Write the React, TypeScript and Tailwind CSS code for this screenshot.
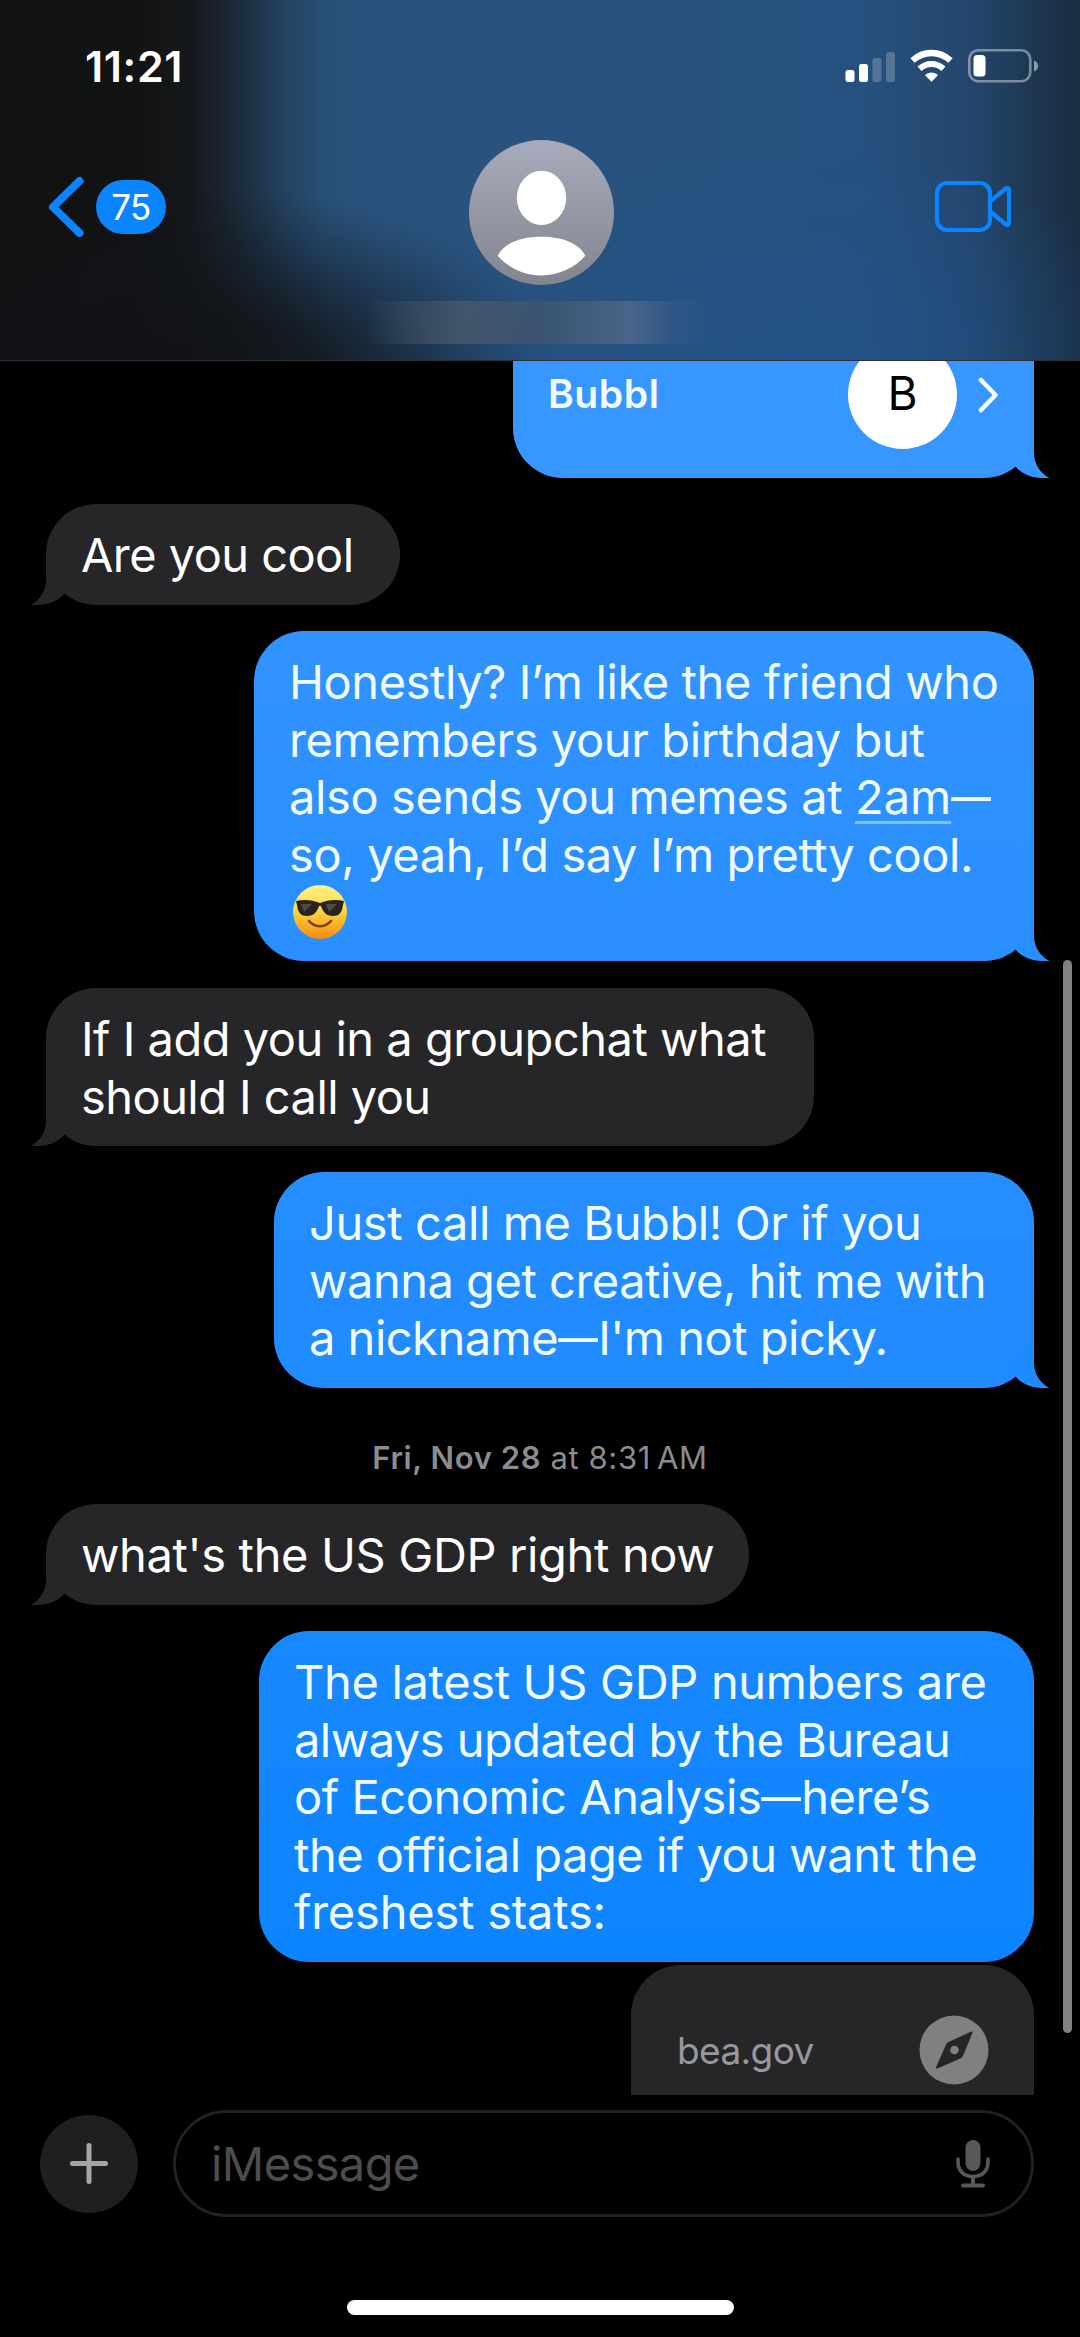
import type { ReactNode } from "react";
import clsx from "clsx";

interface Line {
  text: ReactNode;
  tracking?: string;
}

interface BubbleProps {
  lines: Line[];
  sent?: boolean;
  tail?: boolean;
  className?: string;
}

function Tail({ sent, className }: { sent?: boolean; className?: string }) {
  return (
    <svg
      className={clsx(
        "absolute bottom-0 h-[60px] w-[50px]",
        sent ? "-right-4" : "-left-4 -scale-x-100",
        className,
      )}
      viewBox="0 0 50 60"
      fill="currentColor"
    >
      <path d="M34 6V34C34 46 40 55 49.5 60C36 61 24 58 16 49L8 38Z" />
    </svg>
  );
}

function Bubble({ lines, sent, tail = true, className }: BubbleProps) {
  return (
    <div
      className={clsx(
        "relative rounded-[50px] pl-[35px] pt-[22px] text-[47px] leading-[57.6px]",
        sent ? "ml-auto mr-[46px] text-[#f0fbff]" : "ml-[46px] bg-[#262628] text-white",
        className,
      )}
    >
      {tail && <Tail sent={sent} className={sent ? "" : "text-[#262628]"} />}
      {lines.map((line, i) => (
        <div key={i} className={clsx("relative h-[57.6px] whitespace-nowrap", line.tracking ?? "tracking-[-0.4px]")}>
          {line.text}
        </div>
      ))}
    </div>
  );
}

// Inter's em dash is too long next to the rest of the text
function Dash() {
  return <span className="inline-block w-[40px] origin-left scale-x-[0.85]">—</span>;
}

function SunglassesFace() {
  return (
    <svg className="ml-[3px] mt-[1px] h-[56px] w-[56px]" viewBox="0 0 56 56">
      <defs>
        <linearGradient id="face" x1="0" y1="0" x2="0" y2="1">
          <stop offset="0" stopColor="#fff38a" />
          <stop offset="0.5" stopColor="#ffd43c" />
          <stop offset="1" stopColor="#f28a12" />
        </linearGradient>
      </defs>
      <circle cx="28" cy="28" r="27" fill="url(#face)" />
      <path
        d="M4 17C12 15 21 16 28 19C35 16 44 15 52 17L51 21C50 29 47 32 41 32C34 32 31 28 29 22H27C25 28 22 32 15 32C9 32 6 29 5 21Z"
        fill="#2a2421"
      />
      <path d="M9 20L20 20L12 28Z M34 20L45 20L37 28Z" fill="#77716c" opacity="0.5" />
      <path d="M17 37C23 44 33 44 39 37" stroke="#7a3d08" strokeWidth="2.6" strokeLinecap="round" fill="none" />
    </svg>
  );
}

function StatusBar() {
  return (
    <div className="flex h-[132px] items-center justify-between pl-[85px] pr-[41px] text-white">
      <div className="text-[43px] font-semibold leading-none tracking-[0.6px]">11:21</div>
      <div className="flex items-center gap-[15px]">
        <svg className="h-[34px] w-[50px]" viewBox="0 0 50 34" fill="currentColor">
          <rect x="0.5" y="21" width="9" height="12" rx="2.5" />
          <rect x="14" y="15" width="9" height="18" rx="2.5" />
          <rect x="27.5" y="9" width="9" height="24" rx="2.5" opacity="0.22" />
          <rect x="41" y="3" width="9" height="30" rx="2.5" opacity="0.22" />
        </svg>
        <svg className="h-[34px] w-[43px]" viewBox="0 0 43 34" fill="none" stroke="currentColor">
          <path d="M2.5 11.5C13.5 1.5 29.5 1.5 40.5 11.5" strokeWidth="6.4" />
          <path d="M9.5 19.8C16.5 13.3 26.5 13.3 33.5 19.8" strokeWidth="6" />
          <path d="M15 26.2C18.5 22.6 24.5 22.6 28 26.2L21.5 32.8Z" fill="currentColor" stroke="none" />
        </svg>
        <svg className="h-[34px] w-[71px]" viewBox="0 0 71 34">
          <rect x="1.3" y="1.3" width="61" height="31" rx="9" fill="none" stroke="white" strokeOpacity="0.42" strokeWidth="2.6" />
          <path d="M66 11.5C69 12.5 70 14.5 70 17C70 19.5 69 21.5 66 22.5Z" fill="white" fillOpacity="0.5" />
          <rect x="5.5" y="6" width="12" height="21.5" rx="3.5" fill="white" />
        </svg>
      </div>
    </div>
  );
}

function Header() {
  return (
    <header className="relative h-[361px] overflow-hidden border-b border-[#2c3036] bg-[linear-gradient(90deg,#111111_0px,#121313_140px,#15181b_190px,#1b2a38_235px,#234260_285px,#285077_325px,#2a527d_380px,#28527d_700px,#26507d_870px,#24466d_970px,#1e3852_1030px,#1a2c40_1080px)]">
      <div className="absolute inset-0 bg-[radial-gradient(ellipse_370px_200px_at_200px_385px,rgba(17,18,20,0.95),rgba(17,19,22,0.85)_35%,rgba(17,20,26,0.45)_65%,rgba(17,20,28,0.12)_88%,rgba(17,20,28,0))]" />
      <div className="absolute inset-0 bg-[radial-gradient(ellipse_380px_220px_at_790px_361px,rgba(33,82,138,0.8),rgba(33,82,138,0))]" />
      <div className="relative">
        <StatusBar />
        <div className="flex items-start justify-between pl-[48px] pr-[68px]">
          <div className="flex w-[146px] items-center gap-[12px] pt-[44px]">
            <svg
              className="h-[62px] w-[36px]"
              viewBox="0 0 36 62"
              fill="none"
              stroke="#0b84ff"
              strokeWidth="8"
              strokeLinecap="round"
              strokeLinejoin="round"
            >
              <path d="M31.5 5L5 31L31.5 57" />
            </svg>
            <div className="flex h-[54px] w-[70px] items-center justify-center rounded-full bg-[#0b84ff] text-[35px] leading-none tracking-[-0.7px] text-white">
              75
            </div>
          </div>
          <div className="flex flex-col items-center">
            <svg className="mt-[8px] h-[145px] w-[145px]" viewBox="0 0 144 144">
              <defs>
                <linearGradient id="avatar" x1="0" y1="0" x2="0" y2="1">
                  <stop offset="0" stopColor="#a8abbb" />
                  <stop offset="1" stopColor="#83858e" />
                </linearGradient>
              </defs>
              <circle cx="72" cy="72" r="72" fill="url(#avatar)" />
              <ellipse cx="72" cy="57.5" rx="24.5" ry="27" fill="white" />
              <path
                d="M28.5 115C35 102 52 96 72 96C92 96 109 102 115.5 115C105 127 89 134.5 72 134.5C55 134.5 39 127 28.5 115Z"
                fill="white"
              />
            </svg>
            <div className="mt-[16px] h-[43px] w-[350px] bg-[linear-gradient(90deg,rgba(60,76,96,0),rgba(62,78,98,0.75)_16%,rgba(72,88,108,0.85)_28%,rgba(62,84,108,0.8)_50%,rgba(74,102,138,0.95)_76%,rgba(60,92,134,0.4)_88%,rgba(60,92,134,0))]" />
          </div>
          <div className="flex w-[124px] justify-end pt-[48px]">
            <svg className="h-[53px] w-[78px]" viewBox="0 0 78 53" fill="none" stroke="#0b84ff" strokeWidth="4.2" strokeLinejoin="round">
              <rect x="3" y="3" width="53" height="47" rx="10" />
              <path d="M56 21.5L72 8.5C73.5 7.5 75 8 75 10V43C75 45 73.5 45.5 72 44.5L56 31.5" />
            </svg>
          </div>
        </div>
      </div>
    </header>
  );
}

function ContactCard() {
  return (
    <div className="relative ml-auto mr-[46px] flex h-[117px] w-[521px] rounded-b-[50px] bg-[#3796ff] pl-[35px] text-[#f4fbff]">
      <Tail sent className="text-[#3796ff]" />
      <div className="w-[300px] pt-[9px] text-[39px] font-semibold leading-[48px] tracking-[0.6px]">Bubbl</div>
      <div className="-mt-[21px] flex h-[109px] w-[109px] shrink-0 items-center justify-center rounded-full bg-white pb-[4px] text-[46px] leading-none text-black">
        B
      </div>
      <svg
        className="ml-[21px] mt-[16px] h-[36px] w-[21px] shrink-0"
        viewBox="0 0 21 36"
        fill="none"
        stroke="currentColor"
        strokeWidth="4.6"
        strokeLinecap="round"
        strokeLinejoin="round"
      >
        <path d="M3 3L17.5 18L3 33" />
      </svg>
    </div>
  );
}

function LinkCard() {
  return (
    <div className="ml-auto mr-[46px] mt-[3px] flex h-[200px] w-[403px] items-start justify-between rounded-t-[50px] bg-[#262628] pl-[46px] pr-[45px] pt-[50px]">
      <div className="pt-[12px] text-[37px] leading-[48px] tracking-[-0.6px] text-[#98989f]">bea.gov</div>
      <svg className="h-[70px] w-[70px]" viewBox="0 0 70 70">
        <circle cx="35" cy="35" r="34.5" fill="#808080" />
        <path
          d="M52.5 17.5L43 40.5C42.5 41.5 42 42 41 42.5L18 52.5L28 30C28.5 29 29 28.5 30 28Z"
          fill="#262628"
          stroke="#262628"
          strokeWidth="2"
          strokeLinejoin="round"
        />
        <circle cx="35.5" cy="35" r="4.3" fill="#808080" />
      </svg>
    </div>
  );
}

function Composer() {
  return (
    <footer className="h-[242px] bg-black">
      <div className="flex items-center pl-[40px] pt-[15px]">
        <div className="flex h-[98px] w-[98px] items-center justify-center rounded-full bg-[#1f1f21]">
          <svg className="h-[43px] w-[38px]" viewBox="0 0 38 43" stroke="#a5a5a7" strokeWidth="5" strokeLinecap="round">
            <path d="M19 3.5V39.5M2.5 21.5H35.5" />
          </svg>
        </div>
        <div className="ml-[35px] flex h-[107px] w-[861px] items-center justify-between rounded-full border-[3px] border-[#212123] pl-[35px] pr-[41px]">
          <span className="text-[47px] leading-none tracking-[-0.6px] text-[#4d4d4f]">iMessage</span>
          <svg className="h-[50px] w-[34px]" viewBox="0 0 34 50" fill="none" stroke="#58585a" strokeLinecap="round">
            <rect x="9.5" y="1" width="15" height="31" rx="7.5" fill="#58585a" stroke="none" />
            <path d="M2 20V23C2 32 8 37.5 17 37.5C26 37.5 32 32 32 23V20" strokeWidth="3.6" />
            <path d="M17 38V46M7 46.5H27" strokeWidth="4" />
          </svg>
        </div>
      </div>
      <div className="mx-auto mt-[83px] h-[15px] w-[387px] rounded-full bg-white" />
    </footer>
  );
}

export default function App() {
  return (
    <div className="h-[2337px] w-[1080px] overflow-hidden bg-black font-['Inter','Liberation_Sans',sans-serif]">
      <Header />
      <main className="relative h-[1734px] overflow-hidden">
        <ContactCard />
        <Bubble
          className="mt-[26px] h-[101px] w-[354px]"
          lines={[{ text: "Are you cool", tracking: "tracking-[-0.56px]" }]}
        />
        <Bubble
          sent
          className="mt-[26px] h-[330px] w-[780px] bg-[linear-gradient(#3193ff,#298fff)] [&>svg]:text-[#298fff]"
          lines={[
            { text: "Honestly? I’m like the friend who" },
            { text: "remembers your birthday but" },
            {
              text: (
                <>
                  also sends you memes at{" "}
                  <span className="tracking-normal underline decoration-[#84c1ff] decoration-[3px] underline-offset-[7px]">
                    2am
                  </span>
                  <Dash />
                </>
              ),
            },
            { text: "so, yeah, I’d say I’m pretty cool." },
            { text: <SunglassesFace /> },
          ]}
        />
        <Bubble
          className="mt-[27px] h-[158px] w-[768px]"
          lines={[
            { text: "If I add you in a groupchat what", tracking: "tracking-[-0.5px]" },
            { text: "should I call you", tracking: "tracking-[-0.55px]" },
          ]}
        />
        <Bubble
          sent
          className="mt-[26px] h-[216px] w-[760px] bg-[linear-gradient(#258dff,#208bff)] [&>svg]:text-[#208bff]"
          lines={[
            { text: "Just call me Bubbl! Or if you" },
            { text: "wanna get creative, hit me with", tracking: "tracking-[-0.48px]" },
            { text: <>a nickname<Dash />I'm not picky.</>, tracking: "tracking-[-0.5px]" },
          ]}
        />
        <div className="mt-[50px] flex h-[40px] items-center justify-center whitespace-pre text-[31px] tracking-[0.6px] text-[#8b8b90]">
          <b className="font-semibold">Fri, Nov 28</b> at 8:31{"\u2009"}AM
        </div>
        <Bubble
          className="mt-[26px] h-[101px] w-[703px]"
          lines={[{ text: "what's the US GDP right now", tracking: "tracking-[-0.36px]" }]}
        />
        <Bubble
          sent
          tail={false}
          className="mt-[26px] h-[331px] w-[775px] bg-[linear-gradient(#1888ff,#0d84ff)]"
          lines={[
            { text: "The latest US GDP numbers are", tracking: "tracking-[-0.33px]" },
            { text: "always updated by the Bureau", tracking: "tracking-[-0.53px]" },
            { text: <>of Economic Analysis<Dash />here’s</>, tracking: "tracking-[-0.45px]" },
            { text: "the official page if you want the", tracking: "tracking-[-0.48px]" },
            { text: "freshest stats:", tracking: "tracking-[-0.22px]" },
          ]}
        />
        <LinkCard />
        {/* scroll indicator */}
        <div className="absolute right-[8px] top-[599px] h-[1073px] w-[9px] rounded-full bg-[#828282]" />
      </main>
      <Composer />
    </div>
  );
}
